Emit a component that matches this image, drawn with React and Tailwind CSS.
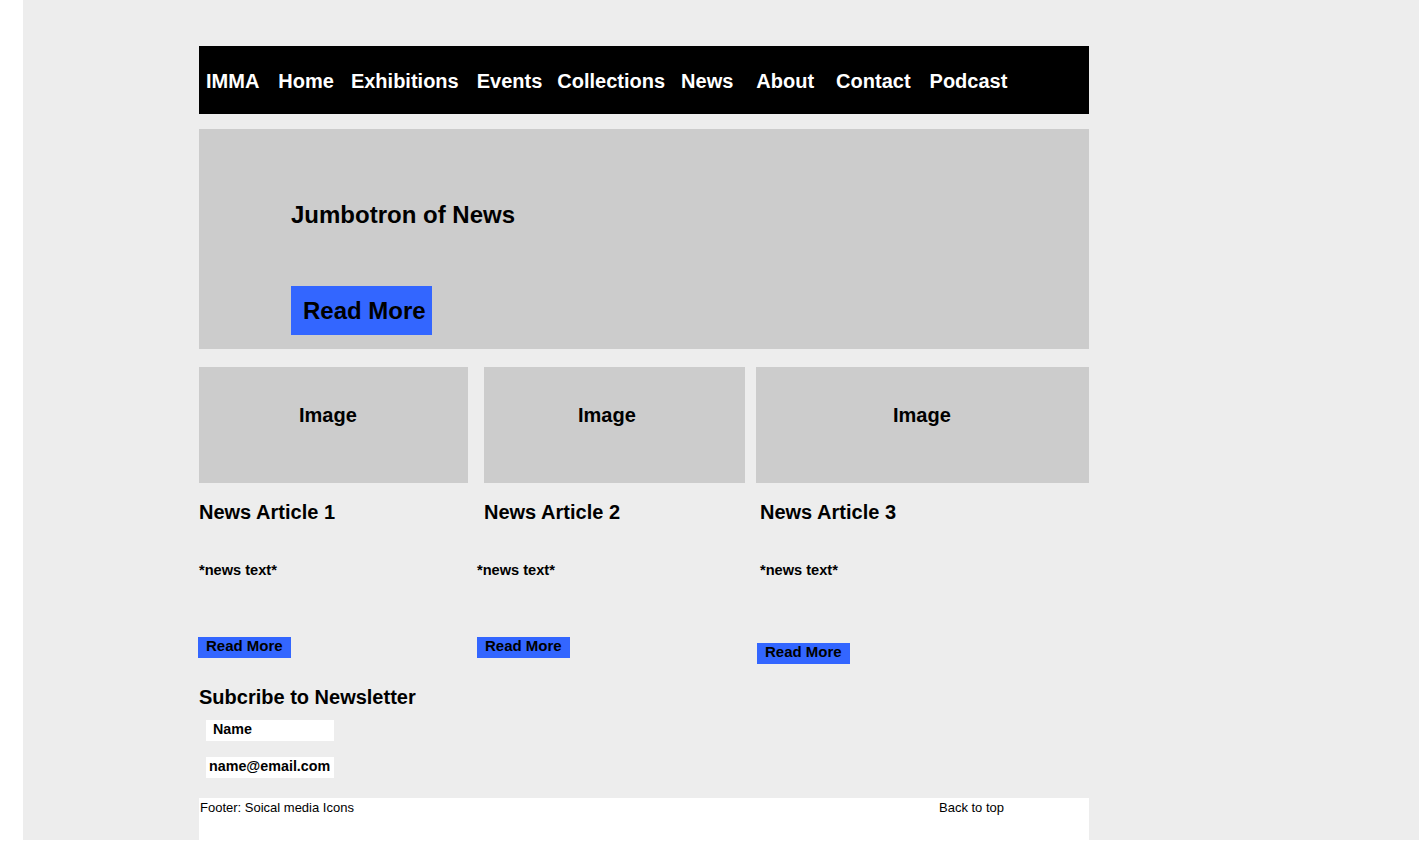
import React from 'react';

const navItems = [
  { label: 'IMMA', cls: 'ml-[7px]' },
  { label: 'Home', cls: 'ml-[19px]' },
  { label: 'Exhibitions', cls: 'ml-[17px]' },
  { label: 'Events', cls: 'ml-[18px]' },
  { label: 'Collections', cls: 'ml-[15px]' },
  { label: 'News', cls: 'ml-[16px]' },
  { label: 'About', cls: 'ml-[23px]' },
  { label: 'Contact', cls: 'ml-[22px]' },
  { label: 'Podcast', cls: 'ml-[19px]' },
];

const cards = [
  { n: 1, box: 'w-[269px]', img: 'pl-[100px]', head: 'ml-0', text: 'ml-0', btn: 'mt-[58px] -ml-px' },
  { n: 2, box: 'w-[261px] ml-[16px]', img: 'pl-[94px]', head: 'ml-0', text: '-ml-[7px]', btn: 'mt-[58px] -ml-[7px]' },
  { n: 3, box: 'w-[333px] ml-[11px]', img: 'pl-[137px]', head: 'ml-[4px]', text: 'ml-[4px]', btn: 'mt-[64px] ml-px' },
];

function Card({ c }) {
  return (
    <div className={`${c.box} flex flex-col items-start`}>
      <div className={`w-full h-[116px] bg-[#cccccc] pt-[36px] ${c.img}`}>
        <span className="text-[20px] leading-[24px] font-bold">Image</span>
      </div>
      <h3 className={`mt-[17px] text-[20px] leading-[24px] font-bold ${c.head}`}>News Article {c.n}</h3>
      <p className={`mt-[37px] text-[14.6px] leading-[18px] font-bold ${c.text}`}>*news text*</p>
      <button className={`${c.btn} w-[93px] h-[21px] bg-[#3366ff] text-left pl-[8px] pb-[3px] text-[15px] leading-[18px] font-bold text-black`}>
        Read More
      </button>
    </div>
  );
}

export default function App() {
  return (
    <div className="min-h-screen bg-white text-black" style={{ fontFamily: '"Liberation Sans", Arial, sans-serif' }}>
      <div className="ml-[23px] h-[840px] bg-[#ededed] pt-[46px]">
        <div className="ml-[176px] w-[890px]">
          {/* nav */}
          <nav className="h-[68px] bg-black flex items-center pt-[2px]">
            {navItems.map((item) => (
              <a key={item.label} className={`${item.cls} text-white text-[20px] leading-[24px] font-bold`}>
                {item.label}
              </a>
            ))}
          </nav>

          {/* jumbotron */}
          <div className="mt-[15px] h-[220px] bg-[#cccccc] pl-[92px] pt-[72px]">
            <h2 className="text-[24px] leading-[28px] font-bold">Jumbotron of News</h2>
            <button className="mt-[57px] w-[141px] h-[49px] bg-[#3366ff] text-left pl-[12px] text-[24px] leading-[49px] font-bold text-black">
              Read More
            </button>
          </div>

          {/* articles */}
          <div className="mt-[18px] flex items-start h-[297px]">
            {cards.map((c) => (
              <Card key={c.n} c={c} />
            ))}
          </div>

          {/* newsletter */}
          <h2 className="mt-[21px] text-[20px] leading-[24px] font-bold">Subcribe to Newsletter</h2>
          <div className="mt-[11px] ml-[7px] w-[128px] h-[21px] bg-white pl-[7px] text-[14.3px] leading-[19px] font-bold">Name</div>
          <div className="mt-[16px] ml-[7px] w-[128px] h-[21px] bg-white pl-[3px] text-[14.3px] leading-[19px] font-bold">name@email.com</div>

          {/* footer */}
          <footer className="mt-[20px] h-[50px] bg-white flex items-start pt-[2px] text-[13px] leading-[15px]">
            <span className="pl-px w-[740px]">Footer: Soical media Icons</span>
            <span>Back to top</span>
          </footer>
        </div>
      </div>
    </div>
  );
}
